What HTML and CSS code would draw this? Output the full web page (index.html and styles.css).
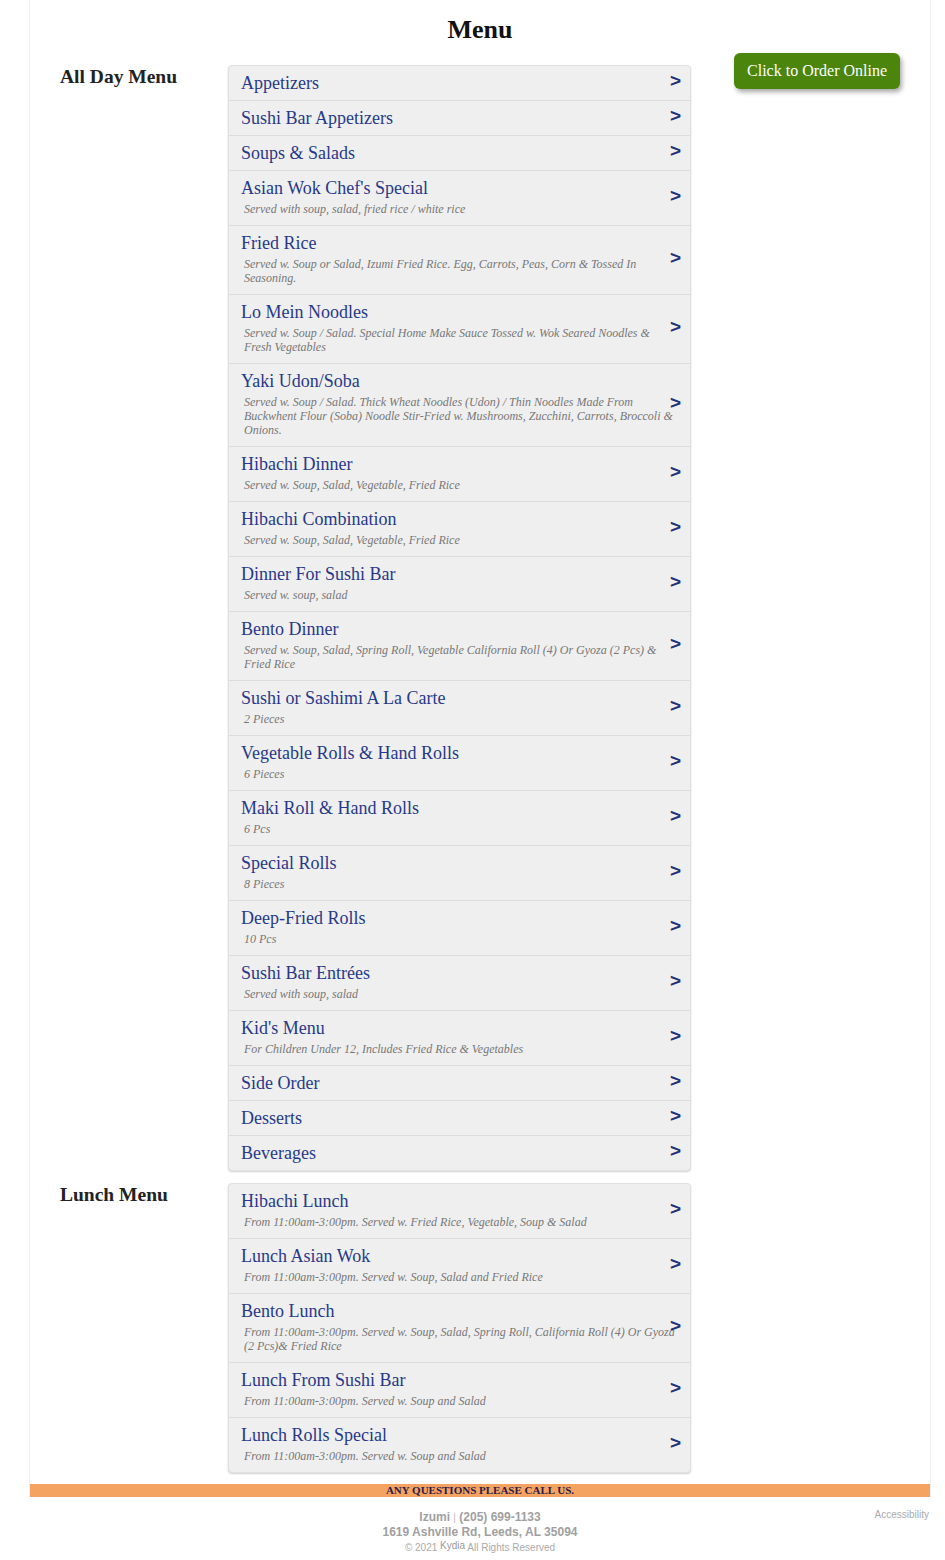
FILE: index.html
```html
<!DOCTYPE html>
<html>
<head>
<meta charset="utf-8">
<title>Menu</title>
<link rel="stylesheet" href="styles.css">
</head>
<body>
<div class="page">
  <h1 class="title">Menu</h1>

  <section class="section">
    <h2 class="sec-name">All Day Menu</h2>
    <ul class="list">
      <li class="row"><div class="row-name">Appetizers</div><span class="arrow">&gt;</span></li>
      <li class="row"><div class="row-name">Sushi Bar Appetizers</div><span class="arrow">&gt;</span></li>
      <li class="row"><div class="row-name">Soups &amp; Salads</div><span class="arrow">&gt;</span></li>
      <li class="row"><div class="row-name">Asian Wok Chef's Special</div><p class="row-desc">Served with soup, salad, fried rice / white rice</p><span class="arrow">&gt;</span></li>
      <li class="row"><div class="row-name">Fried Rice</div><p class="row-desc">Served w. Soup or Salad, Izumi Fried Rice. Egg, Carrots, Peas, Corn &amp; Tossed In Seasoning.</p><span class="arrow">&gt;</span></li>
      <li class="row"><div class="row-name">Lo Mein Noodles</div><p class="row-desc">Served w. Soup / Salad. Special Home Make Sauce Tossed w. Wok Seared Noodles &amp; Fresh Vegetables</p><span class="arrow">&gt;</span></li>
      <li class="row"><div class="row-name">Yaki Udon/Soba</div><p class="row-desc">Served w. Soup / Salad. Thick Wheat Noodles (Udon) / Thin Noodles Made From Buckwhent Flour (Soba) Noodle Stir-Fried w. Mushrooms, Zucchini, Carrots, Broccoli &amp; Onions.</p><span class="arrow">&gt;</span></li>
      <li class="row"><div class="row-name">Hibachi Dinner</div><p class="row-desc">Served w. Soup, Salad, Vegetable, Fried Rice</p><span class="arrow">&gt;</span></li>
      <li class="row"><div class="row-name">Hibachi Combination</div><p class="row-desc">Served w. Soup, Salad, Vegetable, Fried Rice</p><span class="arrow">&gt;</span></li>
      <li class="row"><div class="row-name">Dinner For Sushi Bar</div><p class="row-desc">Served w. soup, salad</p><span class="arrow">&gt;</span></li>
      <li class="row"><div class="row-name">Bento Dinner</div><p class="row-desc">Served w. Soup, Salad, Spring Roll, Vegetable California Roll (4) Or Gyoza (2 Pcs) &amp; Fried Rice</p><span class="arrow">&gt;</span></li>
      <li class="row"><div class="row-name">Sushi or Sashimi A La Carte</div><p class="row-desc">2 Pieces</p><span class="arrow">&gt;</span></li>
      <li class="row"><div class="row-name">Vegetable Rolls &amp; Hand Rolls</div><p class="row-desc">6 Pieces</p><span class="arrow">&gt;</span></li>
      <li class="row"><div class="row-name">Maki Roll &amp; Hand Rolls</div><p class="row-desc">6 Pcs</p><span class="arrow">&gt;</span></li>
      <li class="row"><div class="row-name">Special Rolls</div><p class="row-desc">8 Pieces</p><span class="arrow">&gt;</span></li>
      <li class="row"><div class="row-name">Deep-Fried Rolls</div><p class="row-desc">10 Pcs</p><span class="arrow">&gt;</span></li>
      <li class="row"><div class="row-name">Sushi Bar Entrées</div><p class="row-desc">Served with soup, salad</p><span class="arrow">&gt;</span></li>
      <li class="row"><div class="row-name">Kid's Menu</div><p class="row-desc">For Children Under 12, Includes Fried Rice &amp; Vegetables</p><span class="arrow">&gt;</span></li>
      <li class="row"><div class="row-name">Side Order</div><span class="arrow">&gt;</span></li>
      <li class="row"><div class="row-name">Desserts</div><span class="arrow">&gt;</span></li>
      <li class="row"><div class="row-name">Beverages</div><span class="arrow">&gt;</span></li>
    </ul>
    <div class="order-col"><a class="order-btn" href="#">Click to Order Online</a></div>
  </section>

  <section class="section">
    <h2 class="sec-name">Lunch Menu</h2>
    <ul class="list">
      <li class="row"><div class="row-name">Hibachi Lunch</div><p class="row-desc">From 11:00am-3:00pm. Served w. Fried Rice, Vegetable, Soup &amp; Salad</p><span class="arrow">&gt;</span></li>
      <li class="row"><div class="row-name">Lunch Asian Wok</div><p class="row-desc">From 11:00am-3:00pm. Served w. Soup, Salad and Fried Rice</p><span class="arrow">&gt;</span></li>
      <li class="row"><div class="row-name">Bento Lunch</div><p class="row-desc">From 11:00am-3:00pm. Served w. Soup, Salad, Spring Roll, California Roll (4) Or Gyoza (2 Pcs)&amp; Fried Rice</p><span class="arrow">&gt;</span></li>
      <li class="row"><div class="row-name">Lunch From Sushi Bar</div><p class="row-desc">From 11:00am-3:00pm. Served w. Soup and Salad</p><span class="arrow">&gt;</span></li>
      <li class="row"><div class="row-name">Lunch Rolls Special</div><p class="row-desc">From 11:00am-3:00pm. Served w. Soup and Salad</p><span class="arrow">&gt;</span></li>
    </ul>
    <div class="order-col"></div>
  </section>

  <div class="call-bar">ANY QUESTIONS PLEASE CALL US.</div>
</div>

<footer class="footer">
  <div class="foot-side"></div>
  <div class="foot-main">
    <div class="foot-line"><b>Izumi</b> <span class="sep">|</span> <b>(205) 699-1133</b></div>
    <div class="foot-line"><b>1619 Ashville Rd, Leeds, AL 35094</b></div>
    <div class="foot-copy">© 2021 <span class="kydia">Kydia</span> All Rights Reserved</div>
  </div>
  <div class="foot-side foot-right"><a class="access" href="#">Accessibility</a></div>
</footer>
</body>
</html>
```

FILE: styles.css
```css
* { box-sizing: border-box; }

body {
  margin: 0;
  background: #fff;
  font-family: "Liberation Serif", "Times New Roman", serif;
}

.page {
  width: 902px;
  margin-left: 29px;
  border-left: 1px solid #eeeeee;
  border-right: 1px solid #eeeeee;
}

.title {
  margin: 0 0 8px;
  padding-top: 15px;
  font-size: 26px;
  line-height: 30px;
  font-weight: bold;
  text-align: center;
  color: #111;
}

.section {
  display: grid;
  grid-template-columns: 168px 463px 1fr;
  padding: 0 30px;
}

.sec-name {
  margin: 0;
  padding-top: 13px;
  font-size: 19.5px;
  line-height: 22px;
  font-weight: bold;
  color: #222;
}

.list {
  list-style: none;
  margin: 12px 0 0;
  padding: 0;
  background: #efefef;
  border: 1px solid #e0e0e0;
  border-radius: 4px;
  box-shadow: 0 1px 2px rgba(0, 0, 0, 0.18);
}

.row {
  position: relative;
  padding: 6px 14px 6px 12px;
  border-bottom: 1px solid #dcdcdc;
}

.row:last-child { border-bottom: none; }

.row-name {
  font-size: 18px;
  line-height: 22px;
  color: #27398a;
}

.row-desc {
  margin: 3px 0 3px 3px;
  font-size: 12px;
  line-height: 14px;
  font-style: italic;
  color: #777;
}

.arrow {
  position: absolute;
  right: 9px;
  top: 50%;
  transform: translateY(-60%);
  font-family: "Liberation Sans", Arial, sans-serif;
  font-weight: bold;
  font-size: 19px;
  line-height: 20px;
  color: #22307a;
}

.order-col {
  display: flex;
  justify-content: flex-end;
  align-items: flex-start;
}

.order-btn {
  display: block;
  height: 36px;
  padding: 0 13px;
  line-height: 35px;
  font-size: 16px;
  color: #fff;
  text-decoration: none;
  background: #4b850b;
  border-radius: 6px;
  box-shadow: 2px 3px 5px rgba(0, 0, 0, 0.35);
  white-space: nowrap;
}

.call-bar {
  margin-top: 11px;
  height: 13px;
  background: #f4a460;
  text-align: center;
  font-size: 11px;
  line-height: 13px;
  font-weight: bold;
  color: #2a1c4c;
}

.footer {
  width: 902px;
  margin-left: 29px;
  padding-top: 13px;
  display: grid;
  grid-template-columns: 1fr auto 1fr;
  font-family: "Liberation Sans", Arial, sans-serif;
  color: #a0a0a0;
}

.foot-main { text-align: center; }

.foot-line {
  font-size: 12px;
  line-height: 14px;
}

.foot-line b { font-weight: bold; }

.sep {
  font-size: 10px;
  color: #bbb;
}

.foot-copy {
  margin-top: 2px;
  font-size: 10px;
  line-height: 14px;
  color: #aaa;
}

.kydia {
  font-size: 10px;
  position: relative;
  top: -2px;
  color: #999;
}

.foot-right {
  display: flex;
  justify-content: flex-end;
  align-items: flex-start;
}

.access {
  font-size: 10px;
  line-height: 10px;
  margin-right: 2px;
  color: #aaa;
  text-decoration: none;
}
```
